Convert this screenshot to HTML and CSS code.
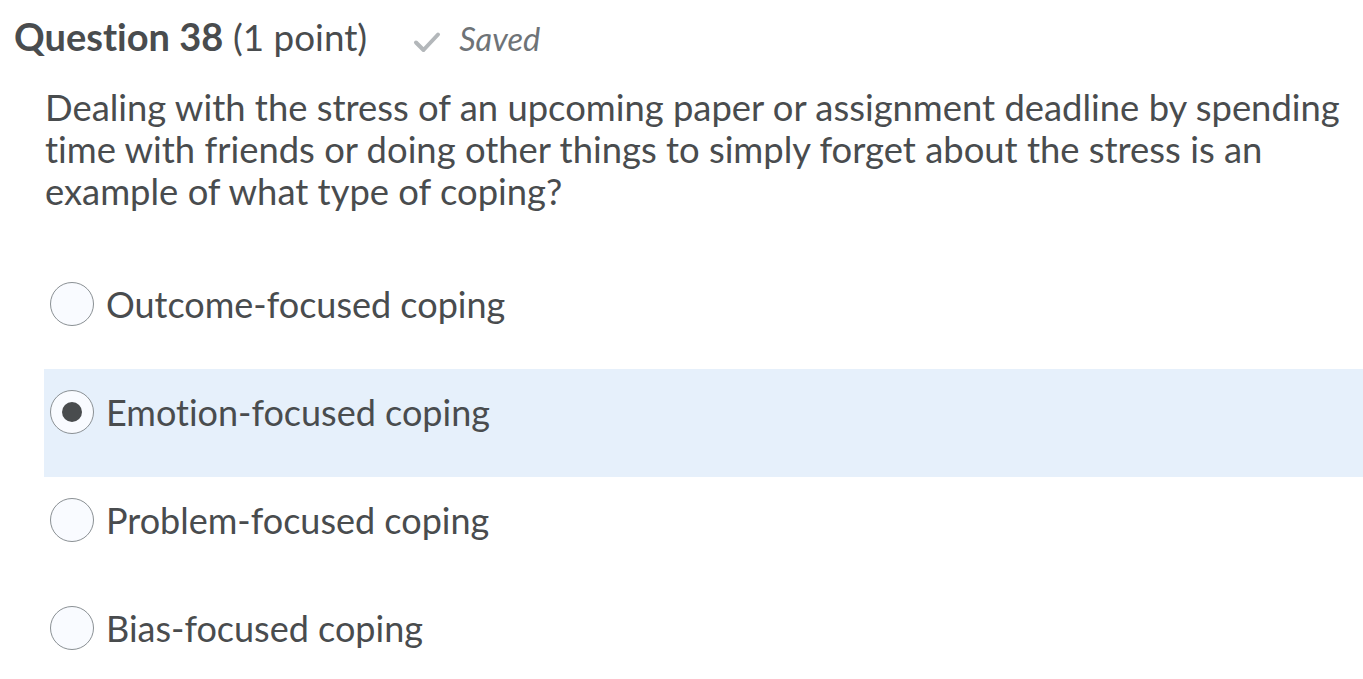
FILE: index.html
```html
<!DOCTYPE html>
<html lang="en">
<head>
<meta charset="utf-8">
<title>Question 38</title>
<link rel="stylesheet" href="styles.css">
</head>
<body>
<div class="page">
  <div class="q-header">
    <h2 class="q-title"><strong>Question 38</strong> <span class="q-points">(1 point)</span></h2>
    <span class="q-status">
      <svg class="check" width="28" height="22" viewBox="0 0 28 22" aria-hidden="true"><path d="M3 11.5 L10.5 19 L25 3.5" fill="none" stroke="#b3b7ba" stroke-width="4" stroke-linecap="round" stroke-linejoin="round"/></svg>
      <em>Saved</em>
    </span>
  </div>
  <p class="q-text">Dealing with the stress of an upcoming paper or assignment deadline by spending time with friends or doing other things to simply forget about the stress is an example of what type of coping?</p>
  <ul class="options">
    <li class="option"><span class="radio"></span><span class="label">Outcome-focused coping</span></li>
    <li class="option selected"><span class="radio"><span class="dot"></span></span><span class="label">Emotion-focused coping</span></li>
    <li class="option"><span class="radio"></span><span class="label">Problem-focused coping</span></li>
    <li class="option"><span class="radio"></span><span class="label">Bias-focused coping</span></li>
  </ul>
</div>
</body>
</html>
```
FILE: styles.css
```css
html, body {
  margin: 0;
  padding: 0;
  background: #ffffff;
}
body {
  font-family: Lato, "Open Sans", "Liberation Sans", sans-serif;
  color: #494c4e;
  overflow: hidden;
  font-variant-ligatures: none;
  font-feature-settings: "liga" 0, "clig" 0;
}
.page {
  padding: 12px 0 0 0;
}
.q-header {
  display: flex;
  align-items: baseline;
  padding-left: 14px;
  height: 48px;
}
.q-title {
  margin: 0;
  font-size: 38px;
  font-weight: 400;
  line-height: 48px;
}
.q-title strong {
  font-weight: 700;
}
.q-points {
  font-size: 36.8px;
}
.q-status {
  margin-left: 46px;
  display: inline-flex;
  align-items: baseline;
  gap: 18px;
  font-size: 32.5px;
  color: #6e7377;
}
.q-status .check {
  position: relative;
  top: 2px;
}
.q-text {
  margin: 26px 20px 0 45px;
  font-size: 36.4px;
  line-height: 42px;
}
.options {
  list-style: none;
  margin: 49px 0 0 44px;
  padding: 0;
}
.option {
  display: flex;
  align-items: center;
  gap: 12px;
  padding: 21px 6px 43px 6px;
}
.option.selected {
  background: #e6f0fb;
}
.radio {
  box-sizing: border-box;
  width: 44px;
  height: 44px;
  border-radius: 50%;
  border: 1.5px solid #8a9094;
  background: #f9fbff;
  display: flex;
  align-items: center;
  justify-content: center;
  flex: none;
}
.dot {
  width: 20px;
  height: 20px;
  border-radius: 50%;
  background: #494c4e;
}
.label {
  font-size: 36px;
  line-height: 44px;
}
```
